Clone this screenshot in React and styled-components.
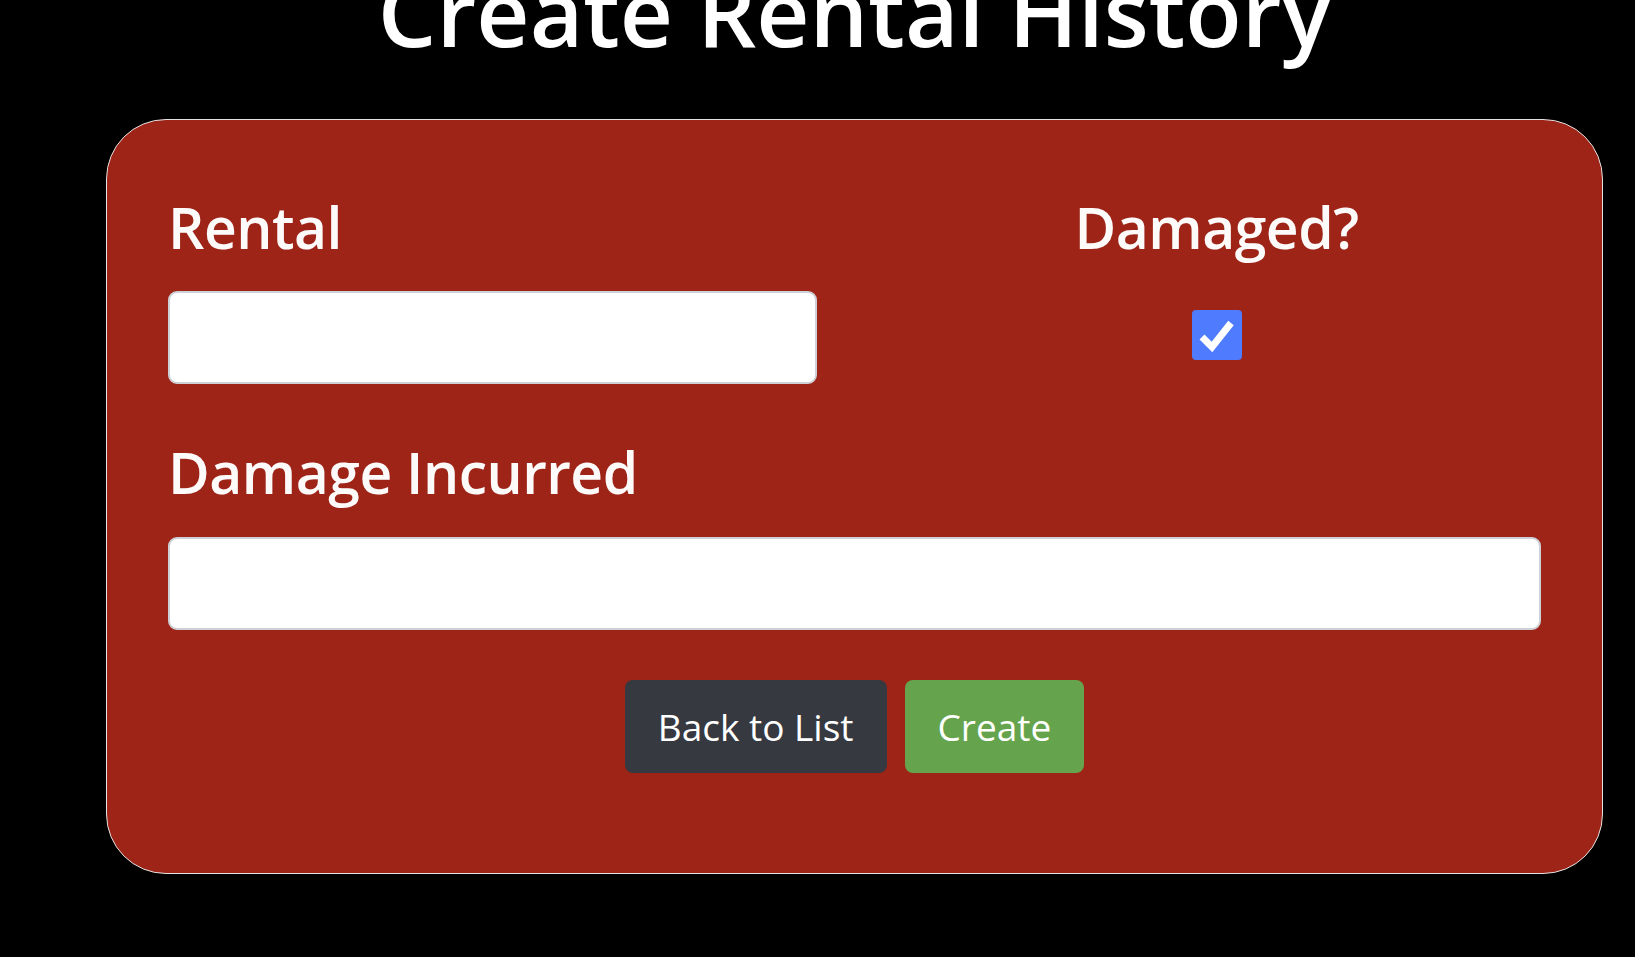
import styled, { createGlobalStyle } from 'styled-components';

const GlobalStyle = createGlobalStyle`
  html, body {
    margin: 0;
    background: #000;
    font-family: 'Open Sans', 'Noto Sans', sans-serif;
    overflow: hidden;
  }
`;

export default function App() {
  return (
    <>
      <GlobalStyle />
      <Page>
        <Title>Create Rental History</Title>
        <Card>
          <Row>
            <Field>
              <Label>Rental</Label>
              <Input type="text" />
            </Field>
            <Field $center>
              <Label>Damaged?</Label>
              <CheckSlot>
                <CheckBox>
                  <svg width="50" height="50" viewBox="0 0 50 50">
                    <polyline
                      points="10,27 20,37 39,13"
                      fill="none"
                      stroke="#fff"
                      strokeWidth="7"
                    />
                  </svg>
                </CheckBox>
              </CheckSlot>
            </Field>
          </Row>
          <Field $top>
            <Label>Damage Incurred</Label>
            <Input type="text" />
          </Field>
          <Actions>
            <Button $variant="dark">Back to List</Button>
            <Button $variant="green">Create</Button>
          </Actions>
        </Card>
      </Page>
    </>
  );
}

const Page = styled.main`
  display: flex;
  flex-direction: column;
  padding: 0 32px 0 106px;
`;

const Title = styled.h1`
  margin: -44px 0 52px;
  font-size: 92.5px;
  line-height: 1.2;
  font-weight: 600;
  color: #fff;
  text-align: center;
  white-space: nowrap;
`;

const Card = styled.section`
  background: #9e2418;
  border: 1.5px solid #e2e2e2;
  border-radius: 60px;
  padding: 73px 61px 100px;
  display: flex;
  flex-direction: column;
`;

const Row = styled.div`
  display: grid;
  grid-template-columns: 1fr 1fr;
  column-gap: 75px;
`;

const Field = styled.div`
  display: flex;
  flex-direction: column;
  align-items: ${(p) => (p.$center ? 'center' : 'stretch')};
  gap: 30px;
  margin-top: ${(p) => (p.$top ? '54px' : '0')};
`;

const Label = styled.label`
  font-size: 57px;
  line-height: 1.2;
  font-weight: 600;
  color: #fdfafa;
  letter-spacing: -0.5px;
`;

const Input = styled.input`
  box-sizing: border-box;
  height: 93px;
  width: 100%;
  border: 2px solid #cdd0d6;
  border-radius: 9px;
  background: #fff;
  outline: none;
`;

const CheckSlot = styled.div`
  height: 93px;
  display: flex;
  align-items: center;
  padding-bottom: 5px;
  box-sizing: border-box;
`;

const CheckBox = styled.span`
  width: 50px;
  height: 50px;
  border-radius: 4px;
  background: #4f7bff;
  display: flex;
`;

const Actions = styled.div`
  display: flex;
  justify-content: center;
  gap: 18px;
  margin-top: 50px;
`;

const Button = styled.button`
  height: 93px;
  padding: 0 33px;
  border: none;
  border-radius: 8px;
  font-family: 'Open Sans', 'Noto Sans', sans-serif;
  font-size: 37px;
  color: #fff;
  background: ${(p) => (p.$variant === 'green' ? '#65a44c' : '#363940')};
`;
